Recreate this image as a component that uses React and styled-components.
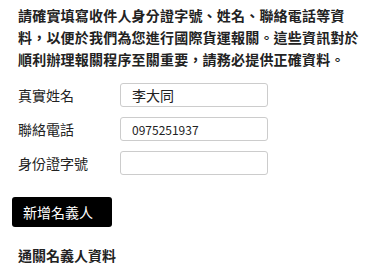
import React from "react";
import styled, { createGlobalStyle } from "styled-components";

const Global = createGlobalStyle`
  html, body { margin: 0; padding: 0; background: #fff; }
  body { font-family: "Noto Sans CJK TC", "Noto Sans", sans-serif; color: #222; }
`;

const Page = styled.div`
  padding: 4px 12px 0 12px;
`;

const Intro = styled.p`
  margin: 0 0 0 6px;
  font-size: 14px;
  font-weight: 700;
  line-height: 22px;
  color: #222;
  letter-spacing: 0.2px;
`;

const Form = styled.div`
  margin: 13px 0 0 6px;
  display: flex;
  flex-direction: column;
  gap: 10px;
`;

const Row = styled.label`
  display: grid;
  grid-template-columns: 102px 148px;
  align-items: center;
`;

const Label = styled.span`
  font-size: 14px;
  color: #222;
`;

const Input = styled.input`
  box-sizing: border-box;
  height: 24px;
  width: 148px;
  border: 1px solid #ccc;
  border-radius: 3px;
  padding: 0 11px;
  font-family: "Noto Sans CJK TC", "Noto Sans", sans-serif;
  font-size: ${(p) => (p.$big ? "14px" : "12px")};
  color: #222;
  outline: none;
`;

const Button = styled.button`
  margin-top: 22px;
  width: 100px;
  height: 30px;
  background: #000;
  color: #fff;
  border: none;
  border-radius: 3px;
  font-family: "Noto Sans CJK TC", "Noto Sans", sans-serif;
  font-size: 14px;
  text-align: left;
  padding: 0 0 0 11px;
`;

const Section = styled.h3`
  margin: 18px 0 0 6px;
  font-size: 14px;
  font-weight: 700;
  color: #222;
`;

export default function App() {
  return (
    <>
      <Global />
      <Page>
        <Intro>
          請確實填寫收件人身分證字號、姓名、聯絡電話等資料，以便於我們為您進行國際貨運報關。這些資訊對於順利辦理報關程序至關重要，請務必提供正確資料。
        </Intro>
        <Form>
          <Row>
            <Label>真實姓名</Label>
            <Input $big defaultValue="李大同" />
          </Row>
          <Row>
            <Label>聯絡電話</Label>
            <Input defaultValue="0975251937" />
          </Row>
          <Row>
            <Label>身份證字號</Label>
            <Input defaultValue="" />
          </Row>
        </Form>
        <Button>新增名義人</Button>
        <Section>通關名義人資料</Section>
      </Page>
    </>
  );
}
